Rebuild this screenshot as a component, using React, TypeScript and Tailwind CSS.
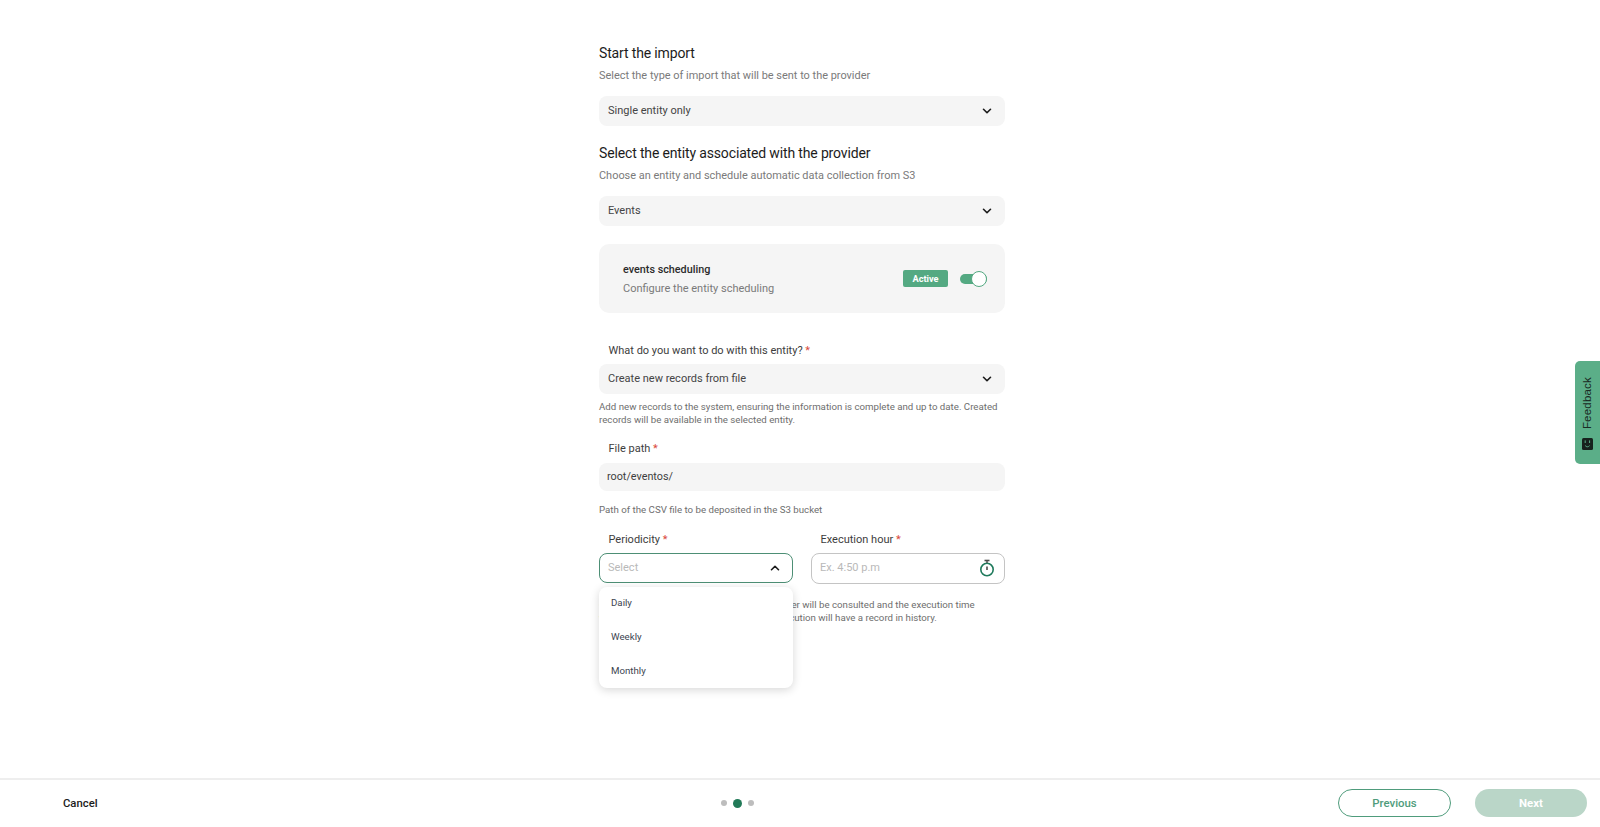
import React from 'react';

import { ChevronDown, ChevronUp } from 'lucide-react';

const Req = () => <span className="text-[#d9483b]">*</span>;

const FieldLabel: React.FC<{ children: React.ReactNode }> = ({ children }) => (
  <p className="px-[9.5px] text-[11px] leading-[16px] text-[#3d3d3d]">
    {children} <Req />
  </p>
);

const GraySelect: React.FC<{ value: string }> = ({ value }) => (
  <div className="flex h-[30px] items-center justify-between rounded-[8px] bg-[#f5f5f5] pl-[9px] pr-[11px] text-[11px] text-[#444444]">
    <span>{value}</span>
    <ChevronDown className="h-[14px] w-[14px] text-[#1c1c1c]" strokeWidth={2.8} />
  </div>
);

const StopwatchIcon = () => (
  <svg width="16" height="18" viewBox="0 0 16 18" fill="none" className="-mt-[2px] text-[#1f7a5c]">
    <circle cx="8" cy="10.5" r="6.2" stroke="currentColor" strokeWidth="1.6" />
    <path d="M5.5 1.5h5" stroke="#4b4b4b" strokeWidth="1.6" />
    <path d="M8 1.5v2.5" stroke="#4b4b4b" strokeWidth="1.4" />
    <path d="M8 7.5v3.5" stroke="#222" strokeWidth="1.3" />
  </svg>
);

const FeedbackTab = () => (
  <div className="absolute right-0 top-[361px] flex h-[103px] w-[25px] flex-col items-center justify-end gap-[9px] rounded-l-[5px] bg-[#5bae88] pb-[14px]">
    <span className="rotate-180 text-[11.5px] leading-none tracking-[0.2px] text-[#1a2a24] [writing-mode:vertical-rl] font-['Liberation_Sans',sans-serif]">
      Feedback
    </span>
    <svg width="11" height="12" viewBox="0 0 11 12">
      <rect width="11" height="12" rx="1.5" fill="#17211d" />
      <path d="M3.2 2.4v2.6M7.6 2.4v2.6M3.2 7.6c1.2 1.6 3.2 1.6 4.4 0" stroke="#5bae88" strokeWidth="1" fill="none" />
    </svg>
  </div>
);

export default function App() {
  return (
    <div className="relative flex h-[827px] flex-col overflow-hidden bg-white font-['Roboto',sans-serif]">
      <main className="flex-1">
        <div className="ml-[599px] w-[406px] pt-[44px]">
          <h2 className="text-[14px] leading-[18px] text-[#1c1c1c] tracking-[-0.15px]">Start the import</h2>
          <p className="mt-[6px] text-[10.95px] leading-[16px] text-[#7a7a7a]">
            Select the type of import that will be sent to the provider
          </p>
          <div className="mt-[12px]">
            <GraySelect value="Single entity only" />
          </div>

          <h2 className="mt-[18px] text-[14px] leading-[18px] text-[#1c1c1c] tracking-[-0.15px]">
            Select the entity associated with the provider
          </h2>
          <p className="mt-[6px] text-[10.95px] leading-[16px] text-[#7a7a7a]">
            Choose an entity and schedule automatic data collection from S3
          </p>
          <div className="mt-[12px]">
            <GraySelect value="Events" />
          </div>

          <div className="mt-[18px] flex h-[69px] items-center justify-between rounded-[10px] bg-[#f5f5f5] pl-[24px] pr-[18px]">
            <div className="pt-[2px]">
              <p className="text-[10.8px] font-medium leading-[16px] text-[#2b2b2b]">events scheduling</p>
              <p className="mt-[3px] text-[11px] leading-[16px] text-[#7a7a7a]">Configure the entity scheduling</p>
            </div>
            <div className="flex items-center gap-[12px]">
              <span className="flex h-[17px] w-[45px] items-center justify-center rounded-[2px] bg-[#54a982] text-[9.2px] font-bold text-white">
                Active
              </span>
              <div className="relative h-[10px] w-[27px] rounded-full bg-[#54a982]">
                <span className="absolute -top-[3px] right-0 h-[16px] w-[16px] rounded-full border border-[#54a982] bg-white" />
              </div>
            </div>
          </div>

          <div className="mt-[30px]">
            <FieldLabel>What do you want to do with this entity?</FieldLabel>
          </div>
          <div className="mt-[5px]">
            <GraySelect value="Create new records from file" />
          </div>
          <p className="mt-[6px] text-[9.7px] leading-[13px] text-[#6e6e6e]">
            Add new records to the system, ensuring the information is complete and up to date. Created records will be
            available in the selected entity.
          </p>

          <div className="mt-[15px]">
            <FieldLabel>File path</FieldLabel>
          </div>
          <div className="mt-[6px] flex h-[28px] items-center rounded-[8px] bg-[#f5f5f5] pl-[8px] text-[10.8px] text-[#3d3d3d]">
            root/eventos/
          </div>
          <p className="mt-[12px] text-[9.7px] leading-[13px] text-[#6e6e6e]">
            Path of the CSV file to be deposited in the S3 bucket
          </p>

          <div className="mt-[16px] grid grid-cols-2 gap-x-[18px]">
            <div className="relative">
              <FieldLabel>Periodicity</FieldLabel>
              <div className="mt-[5px] flex h-[30px] items-center justify-between rounded-[8px] border border-[#4d8f75] pl-[8px] pr-[10px] text-[11px] text-[#b9b9b9]">
                <span>Select</span>
                <ChevronUp className="h-[14px] w-[14px] text-[#1c1c1c]" strokeWidth={2.8} />
              </div>
              <div className="absolute left-0 right-0 top-[55px] z-10 h-[101px] rounded-[8px] bg-white pl-[12px] pt-[8px] text-[9.7px] text-[#3d4550] shadow-[0_2px_10px_rgba(0,0,0,0.16)]">
                <p className="h-[34px] leading-[16px]">Daily</p>
                <p className="h-[34px] leading-[16px]">Weekly</p>
                <p className="leading-[16px]">Monthly</p>
              </div>
            </div>
            <div>
              <FieldLabel>Execution hour</FieldLabel>
              <div className="mt-[5px] flex h-[31px] items-center justify-between rounded-[8px] border border-[#c4c4c4] pl-[8px] pr-[9px] text-[11px] text-[#b9b9b9]">
                <span>Ex. 4:50 p.m</span>
                <StopwatchIcon />
              </div>
            </div>
          </div>
          <p className="mt-[14px] text-[9.7px] leading-[13px] text-[#6e6e6e]">
            Once the time is reached, the selected provider will be consulted and the execution time
            <br />
            will then be saved with the last file. Each execution will have a record in history.
          </p>
        </div>
      </main>

      <footer className="flex h-[49px] items-center justify-between border-t-2 border-[#eeeeee] pb-[1px] pl-[63px] pr-[13px]">
        <button className="pt-[2px] text-[11.3px] font-medium text-[#1c1c1c]">Cancel</button>
        <div className="flex items-center gap-[6px] pl-[39px]">
          <span className="h-[6px] w-[6px] rounded-full bg-[#bdbdbd]" />
          <span className="h-[9px] w-[9px] rounded-full bg-[#227a58]" />
          <span className="h-[6px] w-[6px] rounded-full bg-[#bdbdbd]" />
        </div>
        <div className="flex gap-[24px]">
          <button className="h-[28px] w-[113px] rounded-full border border-[#4f9c7c] pt-[2px] text-[11.4px] font-medium text-[#4f9c7c]">
            Previous
          </button>
          <button className="h-[28px] w-[112px] rounded-full bg-[#bad6c8] pt-[2px] text-[11.4px] font-bold text-white">
            Next
          </button>
        </div>
      </footer>

      <FeedbackTab />
    </div>
  );
}
